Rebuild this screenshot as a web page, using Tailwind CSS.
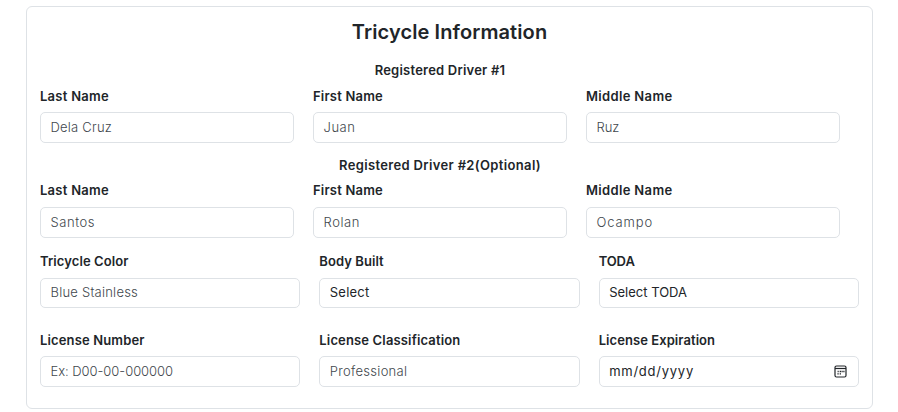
<!DOCTYPE html>
<html lang="en">
<head>
<meta charset="utf-8">
<title>Tricycle Information</title>
<script src="https://cdn.jsdelivr.net/npm/@tailwindcss/browser@4"></script>
</head>
<body class="h-[412px] overflow-hidden bg-white pt-[6px] pl-[26px] font-['Inter',sans-serif] text-[13px] text-[#212529]">
<main class="h-[403px] w-[847px] rounded-md border border-[#dee2e6] px-[13px] pt-3">
  <h1 class="text-center text-[20px] leading-[26px] font-semibold tracking-[0.1px]">Tricycle Information</h1>

  <section class="mt-4 w-[800px]">
    <h2 class="pb-0.5 text-center leading-[18px] font-semibold tracking-[0.22px]">Registered Driver #1</h2>
    <div class="mt-1.5 grid grid-cols-3 gap-x-[19px]">
      <div class="flex flex-col gap-[7px]">
        <div class="leading-[18px] font-semibold tracking-[0.27px]">Last Name</div>
        <div class="flex h-[31px] items-center rounded-[5px] border border-[#dee2e6] px-[9.5px] font-light tracking-[0.22px] text-[#41474d]">Dela Cruz</div>
      </div>
      <div class="flex flex-col gap-[7px]">
        <div class="leading-[18px] font-semibold tracking-[0.2px]">First Name</div>
        <div class="flex h-[31px] items-center rounded-[5px] border border-[#dee2e6] px-[9.5px] font-light tracking-[0.54px] text-[#41474d]">Juan</div>
      </div>
      <div class="flex flex-col gap-[7px]">
        <div class="leading-[18px] font-semibold tracking-[0.34px]">Middle Name</div>
        <div class="flex h-[31px] items-center rounded-[5px] border border-[#dee2e6] px-[9.5px] font-light tracking-[-0.1px] text-[#41474d]">Ruz</div>
      </div>
    </div>
  </section>

  <section class="mt-[13px] w-[800px]">
    <h2 class="pb-0.5 text-center leading-[18px] font-semibold tracking-[0.35px]">Registered Driver #2(Optional)</h2>
    <div class="mt-[5px] grid grid-cols-3 gap-x-[19px]">
      <div class="flex flex-col gap-2">
        <div class="leading-[18px] font-semibold tracking-[0.27px]">Last Name</div>
        <div class="flex h-[31px] items-center rounded-[5px] border border-[#dee2e6] px-[9.5px] font-light tracking-[0.55px] text-[#41474d]">Santos</div>
      </div>
      <div class="flex flex-col gap-2">
        <div class="leading-[18px] font-semibold tracking-[0.2px]">First Name</div>
        <div class="flex h-[31px] items-center rounded-[5px] border border-[#dee2e6] px-[9.5px] font-light tracking-[0.58px] text-[#41474d]">Rolan</div>
      </div>
      <div class="flex flex-col gap-2">
        <div class="leading-[18px] font-semibold tracking-[0.34px]">Middle Name</div>
        <div class="flex h-[31px] items-center rounded-[5px] border border-[#dee2e6] px-[9.5px] font-light tracking-[0.87px] text-[#41474d]">Ocampo</div>
      </div>
    </div>
  </section>

  <section class="mt-[14px] grid grid-cols-3 gap-x-[19px]">
    <div class="flex flex-col gap-2">
      <div class="leading-[18px] font-semibold tracking-[0.09px]">Tricycle Color</div>
      <div class="flex h-[30px] items-center rounded-[5px] border border-[#dee2e6] px-[9.5px] font-light tracking-[0.23px] text-[#41474d]">Blue Stainless</div>
    </div>
    <div class="flex flex-col gap-2">
      <div class="leading-[18px] font-semibold tracking-[0.07px]">Body Built</div>
      <div class="flex h-[30px] items-center rounded-[5px] border border-[#dee2e6] px-[9.5px] tracking-[0.2px]">Select</div>
    </div>
    <div class="flex flex-col gap-2">
      <div class="leading-[18px] font-semibold tracking-[-0.1px]">TODA</div>
      <div class="flex h-[30px] items-center rounded-[5px] border border-[#dee2e6] px-[9.5px] tracking-[0px]">Select TODA</div>
    </div>
  </section>

  <section class="mt-[23px] grid grid-cols-3 gap-x-[19px]">
    <div class="flex flex-col gap-[7px]">
      <div class="leading-[18px] font-semibold tracking-[0.14px]">License Number</div>
      <div class="flex h-[31px] items-center rounded-[5px] border border-[#dee2e6] px-[9.5px] font-light tracking-[-0.05px] text-[#41474d]">Ex: D00-00-000000</div>
    </div>
    <div class="flex flex-col gap-[7px]">
      <div class="leading-[18px] font-semibold tracking-[0.15px]">License Classification</div>
      <div class="flex h-[31px] items-center rounded-[5px] border border-[#dee2e6] px-[9.5px] font-light tracking-[0.29px] text-[#41474d]">Professional</div>
    </div>
    <div class="flex flex-col gap-[7px]">
      <div class="leading-[18px] font-semibold tracking-[0.07px]">License Expiration</div>
      <div class="flex h-[31px] items-center justify-between rounded-[5px] border border-[#dee2e6] pr-[11px] pl-[9.5px] tracking-[0.75px]">
        <span>mm/dd/yyyy</span>
        <svg class="h-[13px] w-[13px]" viewBox="0 0 13 13" fill="none" stroke="#212529">
          <rect x="1" y="1" width="11" height="11" rx="1.5" stroke-width="1.2"/>
          <path d="M1 3.5h11" stroke-width="1.2"/>
          <path d="M5.7 6.5h1.3M7.5 6.5h1.2M9.3 6.5h1.2M3.4 8.8h1.3M5.7 8.8h1.3M3.6 6.5h1.1" stroke-width="1.3"/>
        </svg>
      </div>
    </div>
  </section>
</main>
</body>
</html>
